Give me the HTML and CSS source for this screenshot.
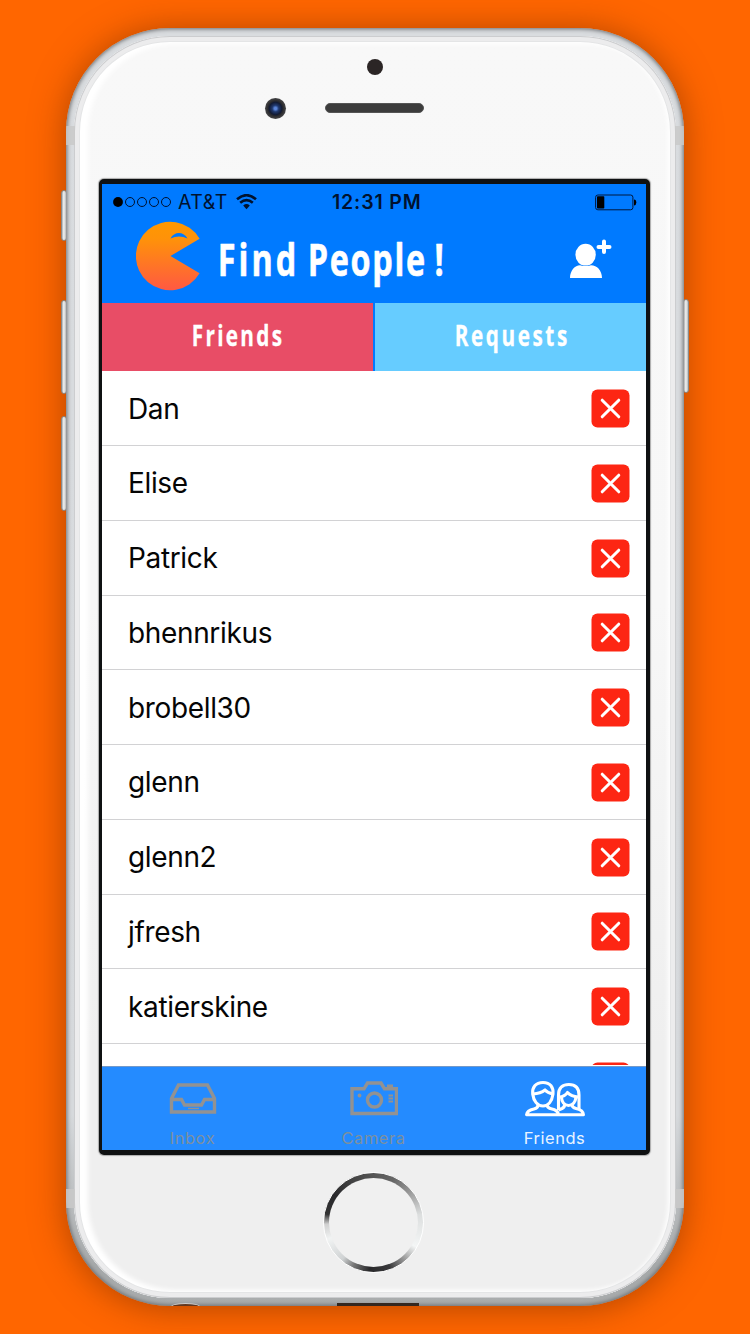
FILE: index.html
```html
<!DOCTYPE html>
<html lang="en">
<head>
<meta charset="utf-8">
<title>Find People</title>
<link rel="stylesheet" href="styles.css">
</head>
<body>
<svg class="defs" width="0" height="0">
  <symbol id="remove" viewBox="0 0 39 39">
    <rect x=".5" y=".5" width="38" height="38" rx="6" fill="#fd2613"/>
    <path d="M11.200 11.200 27.800 27.800M27.800 11.200 11.200 27.800" stroke="#fff" stroke-width="3" stroke-linecap="round"/>
  </symbol>
</svg>
<div class="phone">
  <i class="key mute"></i><i class="key up"></i><i class="key down"></i><i class="key power"></i>
  <div class="body">
    <i class="band tl"></i><i class="band tr"></i><i class="band bl"></i><i class="band br"></i>
    <i class="jack"></i><i class="port"></i>
    <div class="glass">
      <i class="sensor"></i>
      <div class="ear"><i class="camera"></i><i class="speaker"></i></div>
      <div class="screen">
        <header class="header">
          <div class="status">
            <svg class="signal" width="60" height="12" viewBox="0 0 60 12">
              <circle cx="6" cy="6" r="4.9"/>
              <g fill="none" stroke="#00122e" stroke-width="1"><circle cx="18" cy="6" r="4.5"/><circle cx="30" cy="6" r="4.5"/><circle cx="42" cy="6" r="4.5"/><circle cx="54" cy="6" r="4.5"/></g>
            </svg>
            <span class="carrier">AT&amp;T</span>
            <svg class="wifi" width="21" height="16" viewBox="0 0 21 16">
              <path d="M1 5.300Q10.500-2.900 20 5.300M4.200 8.800Q10.500 3.400 16.800 8.800" fill="none" stroke="#00122e" stroke-width="2.600"/>
              <path d="M7.200 11.500Q10.500 8.700 13.800 11.500L10.500 15.200Z" fill="#00122e"/>
            </svg>
            <span class="time">12:31 PM</span>
            <svg class="battery" width="42" height="17" viewBox="0 0 42 17">
              <rect x=".6" y="1" width="37.300" height="14.800" rx="2.300" fill="none" stroke="#00183c"/>
              <rect x="2" y="2.300" width="7.300" height="12.200" rx=".8"/>
              <path d="M39 5.500q2.300.2 2.300 3t-2.300 3z"/>
            </svg>
          </div>
          <div class="titlebar">
            <svg class="logo" width="64" height="70" viewBox="0 0 64 70">
              <defs><linearGradient id="pac" x1="0" y1="0" x2="0" y2="1"><stop offset="0" stop-color="#ff9800"/><stop offset=".25" stop-color="#ff9209"/><stop offset="1" stop-color="#ff5942"/></linearGradient></defs>
              <path d="M63.600 17.700A34.200 34.200 0 1 0 63.600 52.300L34.500 35Z" fill="url(#pac)"/>
              <path d="M34.500 17.600C38 10.200 47.800 10.200 51.500 17.600Q43 13.500 34.500 17.600Z" fill="#007aff"/>
            </svg>
            <svg class="title" width="232" height="66" viewBox="0 0 232 66">
              <g class="marker title-text" transform="scale(.72 1)"><text x="1" y="40" textLength="109">Find</text><text x="126" y="40" textLength="163">People</text><text x="302" y="40">!</text></g>
            </svg>
            <svg class="add" width="43" height="40" viewBox="0 0 43 40" fill="#fff">
              <ellipse cx="16.600" cy="15.700" rx="10.200" ry="10.900"/>
              <path d="M1 39C1 31.500 6 26.200 11 26.200Q16.500 28 22 26.200C28 26.200 33 31.500 33 39Z"/>
              <path d="M35 2.500v10.600M29.500 8h11" stroke="#fff" stroke-width="4" stroke-linecap="round"/>
            </svg>
          </div>
        </header>
        <nav class="tabs">
          <div class="tab on"><svg width="92" height="44"><text class="marker tab-text" transform="scale(.74 1)" x="1" y="31" textLength="122">Friends</text></svg></div>
          <div class="tab"><svg width="114" height="44"><text class="marker tab-text" transform="scale(.74 1)" x="1" y="31" textLength="152">Requests</text></svg></div>
        </nav>
        <ul class="list">
          <li>Dan<svg><use href="#remove"/></svg></li>
          <li>Elise<svg><use href="#remove"/></svg></li>
          <li>Patrick<svg><use href="#remove"/></svg></li>
          <li>bhennrikus<svg><use href="#remove"/></svg></li>
          <li>brobell30<svg><use href="#remove"/></svg></li>
          <li>glenn<svg><use href="#remove"/></svg></li>
          <li>glenn2<svg><use href="#remove"/></svg></li>
          <li>jfresh<svg><use href="#remove"/></svg></li>
          <li>katierskine<svg><use href="#remove"/></svg></li>
          <li><svg><use href="#remove"/></svg></li>
        </ul>
        <footer class="tabbar">
          <div class="item">
            <svg width="48" height="40" viewBox="0 0 48 40" fill="none" stroke="#929292" stroke-width="3.400">
              <path d="M2.500 20.500 9.500 7H38.500L45.500 20.500V34H2.500ZM2.500 21.500H12.500L15.500 27H32.500L35.500 21.500H45.500"/><path d="M19 30.500h11" stroke-width="1.400"/>
            </svg>
            <span>Inbox</span>
          </div>
          <div class="item">
            <svg width="48" height="40" viewBox="0 0 48 40" fill="none" stroke="#929292" stroke-width="3.400">
              <path d="M2 10.800H14L17.500 5H31L34.500 10.800H46.500V35.500H2Z"/><circle cx="24.500" cy="22" r="7"/><path d="M37 8h6" stroke-width="3"/><circle cx="9.500" cy="17.500" r="1.900" fill="#929292" stroke="none"/><path d="M38.500 17.500h4.500M38.500 20.500h4.500M38.500 23.500h4.500" stroke-width="2.200"/>
            </svg>
            <span>Camera</span>
          </div>
          <div class="item on">
            <svg width="60" height="40" viewBox="0 0 60 40" fill="none" stroke="#fff" stroke-width="3.100" stroke-linejoin="round">
              <path d="M18 4.500C10.500 4.500 7 9.500 7.700 16C8.500 23 12.500 28 18 28S27 23 28 16C28.600 9.500 25.500 4.500 18 4.500Z"/>
              <path d="M8 16Q15.500 15.500 20 12Q22.500 15 28 16"/>
              <path d="M13 26.500Q13.500 30 9 31C4 32 1.900 33.500 1.600 36.700H58.400C58.200 33 55.500 31.500 51 30.500Q46.500 29.500 47 26M22 26.500Q22 30 27 31Q32 32 33.500 36M39.500 26Q40 29 37 30.500L33.500 32"/>
              <path d="M33.500 32V17C33.500 9.500 38 6.500 43.800 6.500S54 9.500 54 17V31"/>
              <path d="M34 19Q40 18.500 42.500 14.500Q46 18.500 53.500 19M36.500 19C36.500 24 39.500 27.500 43.500 27.500S50.500 24 51 19"/>
            </svg>
            <span>Friends</span>
          </div>
        </footer>
      </div>
      <div class="home"><i></i></div>
    </div>
  </div>
</div>
</body>
</html>
```
FILE: styles.css
```css
* { box-sizing: border-box; }
body { margin: 0; width: 750px; height: 1334px; overflow: hidden; background: #ff6600; font-family: Inter, "Liberation Sans", sans-serif; }
i { display: block; }
.defs { position: absolute; }

/* Handset */
.phone { position: relative; width: 618px; height: 1278px; margin: 28px 0 0 66px; border-radius: 104px; box-shadow: 0 2px 34px rgba(100, 35, 0, .5); }
.body { position: relative; height: 100%; padding: 8px; border-radius: 104px; overflow: hidden; background: linear-gradient(#d9dcdf, #d6d9dc 85%, #a6a9aa 97%, #aaadae); box-shadow: inset 0 0 4px 1px #686a6d; }
.glass { height: 100%; border-radius: 96px; background: linear-gradient(#f8f8f8, #f7f7f7 45%, #efefef 80%, #efefef); box-shadow: inset 0 0 0 1px #cccdcf, inset 0 0 0 5px #ececed, inset 0 0 0 6px #e4e5e6, inset 6px 0 5px 8px #fff, inset -6px 0 5px 2px #fff; display: flex; flex-direction: column; align-items: center; }
.key { position: absolute; width: 6px; border-radius: 3px; border: 1px solid #888; background: linear-gradient(90deg, #aaa, #f4f4f4 45%, #b8b8b8); left: -5px; }
.mute { top: 162px; height: 51px; }
.up { top: 272px; height: 94px; }
.down { top: 388px; height: 95px; }
.power { left: 617px; top: 271px; height: 94px; }
.band { position: absolute; width: 9px; height: 19px; background: #c9c9c9; opacity: .85; }
.tl, .bl { left: 0; }
.tr, .br { right: 0; }
.tl, .tr { top: 98px; }
.bl, .br { top: 1161px; }
.port { position: absolute; left: 271px; bottom: 0; width: 82px; height: 3px; background: #332720; }
.jack { position: absolute; left: 105px; bottom: -4px; width: 29px; height: 7px; border-radius: 50%; background: #62371f; border: 1px solid #ccc; }
.sensor { width: 16px; height: 16px; margin: 23px 1px 0 0; border-radius: 50%; background: #2b2525; }
.ear { display: flex; align-items: center; gap: 39px; width: 220px; height: 22px; margin: 22px 0 0 0; }
.camera { width: 21px; height: 21px; border-radius: 50%; background: radial-gradient(circle, #5a84d8 0 8%, #20396f 22%, #121b34 42%, #2b2b2e 52%, #454547 70%); }
.speaker { width: 99px; height: 10px; border-radius: 5px; background: #3c3c3c; border: 1px solid #555; }

/* Screen */
.screen { width: 551px; height: 976px; margin: 60px 0 0 -1px; border: solid #0f1112; border-width: 5px 4px 5px 3px; border-radius: 5px; background: #fff; overflow: hidden; flex: none; display: flex; flex-direction: column; box-shadow: 0 0 1px 1px #aaa; }
.header { height: 119px; background: #007aff; flex: none; }
.status { display: flex; align-items: center; height: 36px; padding: 0 9px 0 10px; color: #00122e; font-size: 19.5px; }
.carrier { margin-left: 6px; width: 50px; white-space: nowrap; letter-spacing: .5px; }
.wifi { margin-left: 8px; }
.time { margin-left: 75px; width: 92px; font-weight: 600; font-size: 19.5px; letter-spacing: .85px; white-space: nowrap; }
.battery { margin-left: auto; }
.titlebar { display: flex; height: 83px; padding-left: 34px; }
.logo { margin-top: 1px; }
.title { margin: 16px 0 0 17px; overflow: visible; }
.add { margin: 19px 0 0 120px; }
.marker { font-family: "Open Sans", sans-serif; font-weight: 700; fill: #fff; stroke: #fff; stroke-linejoin: round; }
.title-text { font-size: 45px; stroke-width: .6px; }
.tab-text { font-size: 28px; stroke-width: .3px; }
.tabs { display: flex; gap: 2.500px; height: 68px; background: #007aff; flex: none; }
.tab { width: 271px; display: flex; justify-content: center; align-items: center; background: #66ccff; }
.tab.on { background: #e84d66; }
.list { list-style: none; margin: 0; padding: .3px 0 0; height: 693.5px; overflow: hidden; flex: none; }
.list li { height: 74.75px; display: flex; align-items: center; justify-content: space-between; padding: 1px 16px 0 26px; border-bottom: 1px solid #d2d2d4; font-size: 28px; letter-spacing: -.35px; color: #050505; }
.list svg { width: 39px; height: 39px; margin-left: auto; }
.tabbar { display: flex; margin-top: auto; height: 84px; flex: none; background: #248bff; border-top: 1px solid #7399c9; }
.item { width: 181px; padding-top: 11px; display: flex; flex-direction: column; align-items: center; color: #7c909f; font-size: 16.500px; letter-spacing: .5px; line-height: 20px; }
.item span { margin-top: 10px; }
.item.on { color: #e9f4ff; }

/* Home button */
.home { width: 101px; height: 101px; margin: 17px 0 0 -3px; padding: 5px; flex: none; border-radius: 50%; border: 1px solid #fff; background: conic-gradient(#555 0deg, #666 25deg, #999 50deg, #dcdede 80deg, #f4f6f6 120deg, #999 140deg, #39393b 160deg, #29292b 185deg, #777 205deg, #cfd2d3 220deg, #f1f3f3 250deg, #d0d0d0 268deg, #333 280deg, #29292c 305deg, #444 335deg, #555 360deg); }
.home i { height: 100%; border-radius: 50%; background: #f0f0f0; }
```
